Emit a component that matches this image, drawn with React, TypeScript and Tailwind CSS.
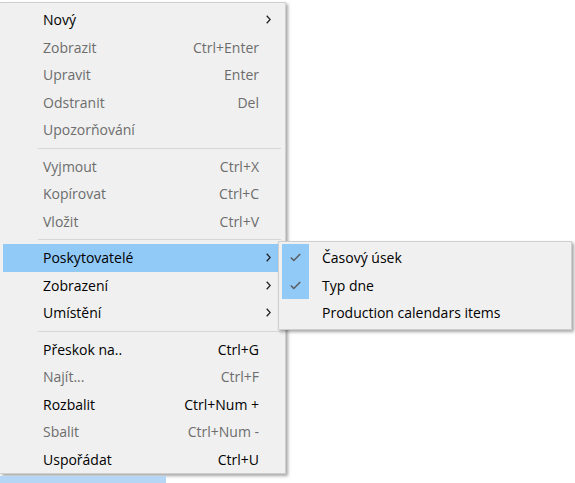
type Item = {
  label: string;
  shortcut?: string;
  disabled?: boolean;
  submenu?: boolean;
  active?: boolean;
};

const sections: Item[][] = [
  [
    { label: 'Nový', submenu: true },
    { label: 'Zobrazit', shortcut: 'Ctrl+Enter', disabled: true },
    { label: 'Upravit', shortcut: 'Enter', disabled: true },
    { label: 'Odstranit', shortcut: 'Del', disabled: true },
    { label: 'Upozorňování', disabled: true },
  ],
  [
    { label: 'Vyjmout', shortcut: 'Ctrl+X', disabled: true },
    { label: 'Kopírovat', shortcut: 'Ctrl+C', disabled: true },
    { label: 'Vložit', shortcut: 'Ctrl+V', disabled: true },
  ],
  [
    { label: 'Poskytovatelé', submenu: true, active: true },
    { label: 'Zobrazení', submenu: true },
    { label: 'Umístění', submenu: true },
  ],
  [
    { label: 'Přeskok na..', shortcut: 'Ctrl+G' },
    { label: 'Najít...', shortcut: 'Ctrl+F', disabled: true },
    { label: 'Rozbalit', shortcut: 'Ctrl+Num +' },
    { label: 'Sbalit', shortcut: 'Ctrl+Num -', disabled: true },
    { label: 'Uspořádat', shortcut: 'Ctrl+U' },
  ],
];

const subItems = [
  { label: 'Časový úsek', checked: true },
  { label: 'Typ dne', checked: true },
  { label: 'Production calendars items', checked: false },
];

function Chevron() {
  return (
    <svg width="5" height="9" viewBox="0 0 5 9" className="block">
      <path d="M0.7 0.8 L4.2 4.5 L0.7 8.2" fill="none" stroke="#222" strokeWidth="1.3" />
    </svg>
  );
}

function Check() {
  return (
    <svg width="11" height="9" viewBox="0 0 11 9" className="block">
      <path d="M0.8 4.6 L3.8 7.6 L10.2 1" fill="none" stroke="#5a5a5a" strokeWidth="1.4" />
    </svg>
  );
}

function Row({ item }: { item: Item }) {
  return (
    <div
      className={`flex h-[27.5px] items-center ${item.active ? 'bg-[#91c9f7]' : ''} ${
        item.disabled ? 'text-[#6d6d6d]' : 'text-black'
      }`}
    >
      <span className="flex-1 pl-[40px]">{item.label}</span>
      {item.shortcut && <span>{item.shortcut}</span>}
      <span className="flex w-[23px] justify-start pl-[7px]">{item.submenu && <Chevron />}</span>
    </div>
  );
}

export default function App() {
  return (
    <div
      className="relative h-[483px] w-[575px] overflow-hidden bg-white text-[14px]"
      style={{ fontFamily: '"Open Sans", "Noto Sans", sans-serif' }}
    >
      <div className="mt-[2px] w-[286px] border-t border-r border-b border-[#cfcfcf] bg-[#f0f0f0] pt-[3px] pb-0 pl-[3px] pr-[3px] shadow-[2px_2px_3px_rgba(0,0,0,0.35)]">
        {sections.map((sec, si) => (
          <div key={si}>
            {si > 0 && (
              <div className="flex h-[9px] items-center pl-[35px] pr-[1px]">
                <div className="h-px w-full bg-[#d7d7d7]" />
              </div>
            )}
            {sec.map((it) => (
              <Row key={it.label} item={it} />
            ))}
          </div>
        ))}
      </div>
      <div className="mt-[2px] h-[8px] w-[166px] bg-[#b5d6f5]" />

      {/* submenu */}
      <div className="absolute left-[278px] top-[241px] w-[294px] border border-[#cfcfcf] bg-[#f0f0f0] py-[2px] pl-[3px] pr-[3px] shadow-[2px_2px_3px_rgba(0,0,0,0.35)]">
        {subItems.map((s) => (
          <div key={s.label} className="flex h-[27.5px] items-center text-black">
            <span className={`flex h-full w-[27px] items-center justify-center ${s.checked ? 'bg-[#91c9f7]' : ''}`}>
              {s.checked && <Check />}
            </span>
            <span className="pl-[13px]">{s.label}</span>
          </div>
        ))}
      </div>
    </div>
  );
}
